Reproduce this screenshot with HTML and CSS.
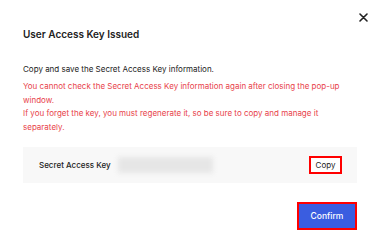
FILE: index.html
```html
<!DOCTYPE html>
<html lang="en">
<head>
    <meta charset="UTF-8">
    <meta name="viewport" content="width=device-width, initial-scale=1.0">
    <title>User Access Key Issued</title>
    <link rel="stylesheet" href="styles.css">
</head>
<body>
    <div class="modal">
        <button class="close_btn" type="button" aria-label="Close">
            <svg width="9" height="9" viewBox="0 0 9 9">
                <path d="M1 1 L8 8 M8 1 L1 8" stroke="#222" stroke-width="1.6" stroke-linecap="round"/>
            </svg>
        </button>
        <h3 class="modal_title">User Access Key Issued</h3>
        <p class="info">Copy and save the Secret Access Key information.</p>
        <p class="warning">
            You cannot check the Secret Access Key information again after closing the pop-up window.<br>
            If you forget the key, you must regenerate it, so be sure to copy and manage it separately.
        </p>
        <div class="key_box">
            <span class="key_label">Secret Access Key</span>
            <span class="key_value"></span>
            <button class="copy_btn" type="button">Copy</button>
        </div>
        <div class="footer">
            <button class="confirm_btn" type="button">Confirm</button>
        </div>
    </div>
</body>
</html>
```

FILE: styles.css
```css
body {
    margin: 0;
    background: #fff;
    font-family: Inter, "Liberation Sans", sans-serif;
    color: #222;
}
.modal {
    position: relative;
    padding: 27px 23px 16px;
}
.close_btn {
    position: absolute;
    top: 12px;
    right: 11px;
    width: 11px;
    height: 11px;
    padding: 0;
    border: none;
    background: none;
    display: flex;
    align-items: center;
    justify-content: center;
}
.modal_title {
    margin: 0;
    font-size: 10px;
    line-height: 14px;
    font-weight: 600;
}
.info {
    margin: 22px 0 0;
    font-size: 8px;
    line-height: 13px;
}
.warning {
    margin: 4px 0 0;
    font-size: 8px;
    line-height: 13.5px;
    color: #e8424a;
}
.key_box {
    display: flex;
    align-items: center;
    height: 36px;
    margin-top: 13px;
    padding: 0 15px 0 16px;
    background: #f8f8f8;
    font-size: 8px;
}
.key_label {
    font-weight: 500;
}
.key_value {
    width: 95px;
    height: 16px;
    margin-left: 7px;
    background: #e6e6e6;
    filter: blur(2.5px);
}
.copy_btn {
    margin-left: auto;
    height: 18px;
    width: 33px;
    padding: 0;
    border: 2px solid #f00;
    background: #fff;
    font-family: inherit;
    font-size: 8px;
    color: #222;
}
.footer {
    display: flex;
    justify-content: flex-end;
    margin-top: 19px;
}
.confirm_btn {
    width: 60px;
    height: 28px;
    padding: 0;
    border: 2px solid #f00;
    background: #3a5de0;
    color: #fff;
    font-family: inherit;
    font-size: 8.5px;
    font-weight: 500;
}
```
